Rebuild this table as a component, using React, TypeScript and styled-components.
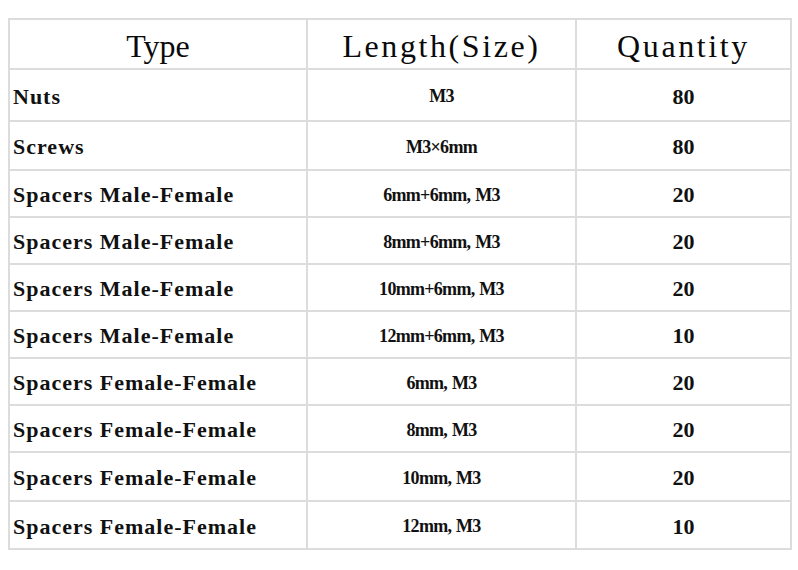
import styled, { createGlobalStyle } from 'styled-components';

const GlobalStyle = createGlobalStyle`
  html, body {
    margin: 0;
    padding: 0;
    background: #ffffff;
  }
  body {
    font-family: "Liberation Serif", "DejaVu Serif", serif;
    color: #111;
  }
`;

const Page = styled.div`
  width: 798px;
  height: 570px;
  box-sizing: border-box;
  padding: 18px 8px 0 8px;
`;

const Table = styled.table`
  width: 782px;
  border-collapse: collapse;
  table-layout: fixed;
  border: 2px solid #dcdcdc;
`;

const HeadCell = styled.th<{ $spacing?: number }>`
  height: 50px;
  padding: 5px 0 0 0;
  box-sizing: border-box;
  border: 2px solid #dcdcdc;
  font-family: "Liberation Serif", serif;
  font-weight: normal;
  font-size: 32px;
  letter-spacing: ${p => p.$spacing ?? 0}px;
  color: #0a0a0a;
  text-align: center;
  vertical-align: middle;
`;

const Cell = styled.td<{ $h: number }>`
  height: ${p => p.$h}px;
  box-sizing: border-box;
  padding: 3px 0 0 0;
  border: 2px solid #dcdcdc;
  font-family: "Liberation Serif", serif;
  font-weight: bold;
  color: #111;
  vertical-align: middle;
  white-space: nowrap;
`;

const TypeCell = styled(Cell)`
  padding-left: 3px;
  font-size: 22px;
  letter-spacing: 1px;
  text-align: left;
`;

const SizeCell = styled(Cell)`
  font-size: 18px;
  letter-spacing: -0.7px;
  word-spacing: 1px;
  text-align: center;
`;

const QtyCell = styled(Cell)`
  font-size: 22px;
  text-align: center;
`;

interface Row {
  type: string;
  size: string;
  qty: number;
}

const rows: Row[] = [
  { type: 'Nuts', size: 'M3', qty: 80 },
  { type: 'Screws', size: 'M3×6mm', qty: 80 },
  { type: 'Spacers Male-Female', size: '6mm+6mm, M3', qty: 20 },
  { type: 'Spacers Male-Female', size: '8mm+6mm, M3', qty: 20 },
  { type: 'Spacers Male-Female', size: '10mm+6mm, M3', qty: 20 },
  { type: 'Spacers Male-Female', size: '12mm+6mm, M3', qty: 10 },
  { type: 'Spacers Female-Female', size: '6mm, M3', qty: 20 },
  { type: 'Spacers Female-Female', size: '8mm, M3', qty: 20 },
  { type: 'Spacers Female-Female', size: '10mm, M3', qty: 20 },
  { type: 'Spacers Female-Female', size: '12mm, M3', qty: 10 },
];

const heights = [52, 49, 47, 47, 47, 47, 47, 47, 49, 48];

export default function App() {
  return (
    <Page>
      <GlobalStyle />
      <Table>
        <colgroup>
          <col style={{ width: 298 }} />
          <col style={{ width: 269 }} />
          <col style={{ width: 215 }} />
        </colgroup>
        <thead>
          <tr>
            <HeadCell>Type</HeadCell>
            <HeadCell $spacing={2.6}>Length(Size)</HeadCell>
            <HeadCell $spacing={2.6}>Quantity</HeadCell>
          </tr>
        </thead>
        <tbody>
          {rows.map((r, i) => (
            <tr key={i}>
              <TypeCell $h={heights[i]}>{r.type}</TypeCell>
              <SizeCell $h={heights[i]}>{r.size}</SizeCell>
              <QtyCell $h={heights[i]}>{r.qty}</QtyCell>
            </tr>
          ))}
        </tbody>
      </Table>
    </Page>
  );
}
